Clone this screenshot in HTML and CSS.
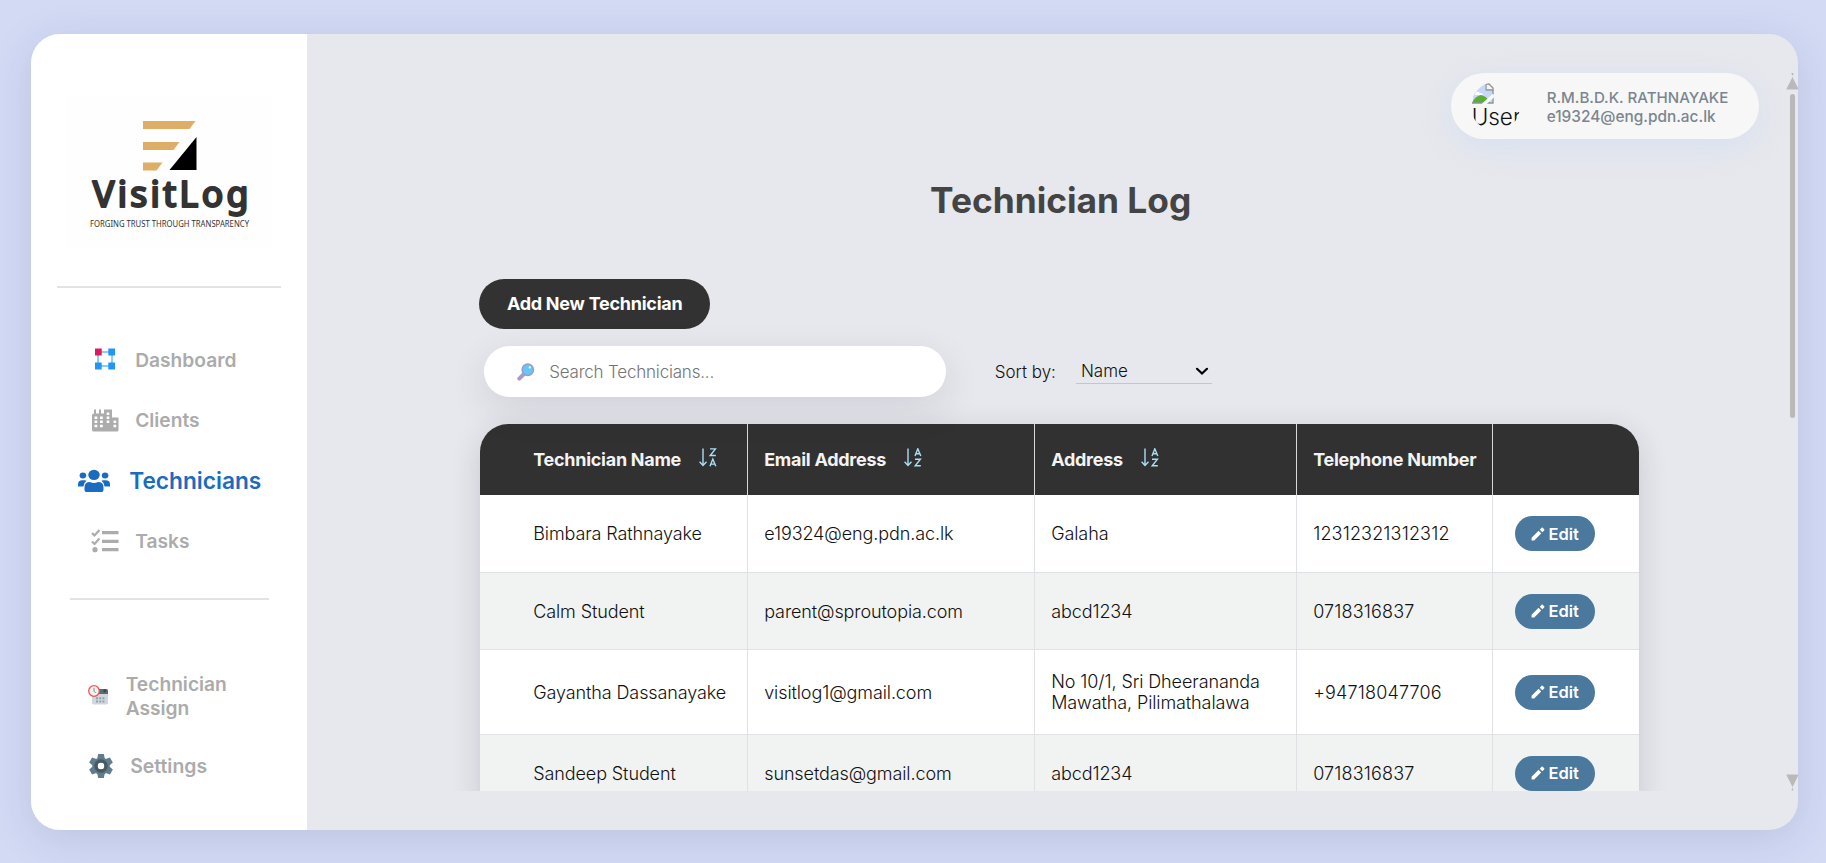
FILE: index.html
```html
<!DOCTYPE html>
<html lang="en">
<head>
<meta charset="utf-8">
<title>VisitLog</title>
<link rel="stylesheet" href="styles.css">
</head>
<body>
<svg class="defs" width="0" height="0">
  <symbol id="pencil" viewBox="0 0 24 24"><path fill="#fff" d="M1 18.500V23h4.500L17.500 11 13 6.500zM22.600 5.900a1.500 1.500 0 0 0 0-2.100L20.200 1.400a1.500 1.500 0 0 0-2.100 0L15 4.500 19.500 9z"/></symbol>
  <symbol id="az" viewBox="0 0 18 19"><g fill="none" stroke="#a9dff5" stroke-width="1.400"><path d="M4 .5V17.500M.6 13.800 4 17.500 7.500 13.800"/><path d="M11 8 13.800.8 16.800 8M12 5.800h3.800M11 11.200h5.400L11.200 17.800h5.600"/></g></symbol>
  <symbol id="za" viewBox="0 0 18 19"><g fill="none" stroke="#a9dff5" stroke-width="1.400"><path d="M4 .5V17.500M.6 13.800 4 17.500 7.500 13.800"/><path d="M11 .9h5.400L11.200 7.500h5.600M11 18.300 13.800 11.100 16.800 18.300M12 16.100h3.800"/></g></symbol>
</svg>
<div class="app">
  <aside class="sidebar">
    <div class="logo">
      <svg width="206" height="152" viewBox="0 0 206 152">
        <path fill="#dead66" d="M77 25H129.500L123.500 33H77zM77 46H113.500L107.500 54H77zM77 66.500H96.500L90.500 74.500H77z"/>
        <path fill="#000" d="M130.500 41V74H103.500z"/>
        <text class="brand" x="26.500" y="110.500" textLength="156" lengthAdjust="spacing">VisitLog</text>
        <text class="tagline" x="24" y="131" textLength="159" lengthAdjust="spacingAndGlyphs">FORGING TRUST THROUGH TRANSPARENCY</text>
      </svg>
    </div>
    <hr class="rule">
    <nav class="nav">
      <a class="item"><svg class="ico dash" width="22" height="22" viewBox="0 0 22 22"><path fill="none" stroke="#90caf9" stroke-width="2" d="M4 4H18V18H4z"/><path fill="#2196f3" d="M14.300.5H21V7.500H14.300zM1 14.500H7.700V21.500H1zM14.300 14.500H21V21.500H14.300z"/><path fill="#d81b60" d="M1 .5H7.700V7.500H1z"/></svg>Dashboard</a>
      <a class="item"><svg class="ico wide" width="28" height="24" viewBox="0 0 28 24"><path fill="#acacac" fill-rule="evenodd" d="M1 6.500L3 5.500V1.500H5V5.500L8 5.500V1.500H10V5.500L13 5.500V1.500H21V9.500H27.500V22Q27.500 23.500 26 23.500H2.500Q1 23.500 1 22zM3.500 8.500v2.500h2.800v-2.500zM9 8.500v2.500h2.800v-2.500zM3.500 12.500v2.500h2.800v-2.500zM9 12.500v2.500h2.800v-2.500zM3.500 16.800v2.500h2.800v-2.500zM9 16.800v2.500h2.800v-2.500zM15.700 4.500v2.500h2.600v-2.500zM15.700 8.500v2.500h2.600v-2.500zM15.700 12.500v2.500h2.600v-2.500zM22.500 12.500v2.500h2.700v-2.500zM22.500 16.800v2.500h2.700v-2.500z"/></svg>Clients</a>
      <a class="item active"><svg class="ico team" width="32" height="23" viewBox="0 0 640 512" preserveAspectRatio="none"><g fill="#1a6cc0"><circle cx="98" cy="145" r="66"/><circle cx="542" cy="145" r="66"/><circle cx="320" cy="130" r="115"/><path d="M0 390V340Q0 250 90 250H130Q155 250 172 262 110 310 108 390zM640 390V340Q640 250 550 250H510Q485 250 468 262 530 310 532 390zM130 460V410Q130 290 240 290 280 310 320 310 360 310 400 290 510 290 510 410V460Q510 512 458 512H182Q130 512 130 460z"/></g></svg>Technicians</a>
      <a class="item"><svg class="ico wide" width="28" height="24" viewBox="0 0 28 24"><g fill="none" stroke="#acacac"><path stroke-width="2.200" d="M1 4 3.500 6.500 8.500 1M1 12.500 3.500 15 8.500 9.500"/><path stroke-width="3.200" d="M11 3.700H27.500M11 12.300H27.500M11 20.700H27.500"/></g><circle cx="4" cy="20.700" r="2.600" fill="#acacac"/></svg>Tasks</a>
    </nav>
    <hr class="rule short">
    <nav class="nav lower">
      <a class="item assign"><svg class="ico" width="20" height="20" viewBox="0 0 20 20"><rect x="4" y="5" width="16" height="14.500" rx="1.800" fill="#cfd8dc"/><path fill="#546e7a" d="M10 4H18.500Q20 4 20 5.500V9H10z"/><circle cx="16.800" cy="5.800" r="1.500" fill="#37474f"/><path fill="#90a4ae" d="M8 12.300h2v2H8zM11.200 12.300h2v2h-2zM14.400 12.300h2v2h-2zM8 15.500h2v2H8zM11.200 15.500h2v2h-2zM14.400 15.500h2v2h-2z"/><circle cx="6" cy="6" r="5.300" fill="#f4f4f4" stroke="#ef5350" stroke-width="1.300"/><path d="M6 2.800V6.200L7.700 8" fill="none" stroke="#777" stroke-width=".9"/></svg><span>Technician<br>Assign</span></a>
      <a class="item settings"><svg class="ico" width="24" height="24" viewBox="-12 -12 24 24"><g fill="#607d8b"><circle r="8.800"/><path id="tooth" d="M-3.700-7.500-2.900-12H2.900L3.700-7.500z"/><use href="#tooth" transform="rotate(60)"/><use href="#tooth" transform="rotate(120)"/><use href="#tooth" transform="rotate(180)"/><use href="#tooth" transform="rotate(240)"/><use href="#tooth" transform="rotate(300)"/></g><circle r="4.900" fill="#fff" stroke="#455a64" stroke-width="3.600"/><circle r="3.200" fill="#fff"/></svg>Settings</a>
    </nav>
  </aside>
  <main class="main">
    <div class="content">
      <header class="top">
        <div class="user">
          <div class="avatar">
            <svg width="24" height="23" viewBox="0 0 24 23"><path fill="#c5d8f6" d="M2 2H14V9H22V21H2z"/><path fill="#fff" d="M4 12q2-4 5-1 3 0 3 2H4z"/><path fill="#5aad36" d="M1 21q3-7 9-8 6 1 9 8z"/><path fill="none" stroke="#8d9295" stroke-width="1.300" d="M1 21H22V8"/><path d="M15 2V8H22V6L18 2z" fill="#f4f4f4" stroke="#8d9295" stroke-width="1.300"/><path stroke="#f7f7f7" stroke-width="3.500" d="M12 23 23 13"/></svg>
            <span>User</span>
          </div>
          <div class="who"><div class="name">R.M.B.D.K. RATHNAYAKE</div><div class="mail">e19324@eng.pdn.ac.lk</div></div>
        </div>
      </header>
      <h1 class="title">Technician Log</h1>
      <section class="panel">
        <button class="add">Add New Technician</button>
        <div class="tools">
          <div class="search"><svg width="18" height="18" viewBox="0 0 18 18"><path d="M2.300 15.700 7 11" stroke="#a79bc9" stroke-width="4" stroke-linecap="round"/><circle cx="10.800" cy="6.800" r="5.700" fill="#64c8f4" stroke="#9d9ac8" stroke-width="1.500"/><circle cx="12.800" cy="4.400" r="1.100" fill="#fff"/></svg><span>Search Technicians...</span></div>
          <span class="sortlabel">Sort by:</span>
          <div class="select"><span>Name</span><svg width="14" height="9" viewBox="0 0 14 9"><path d="M2 1.800 7 6.600 12 1.800" fill="none" stroke="#000" stroke-width="2.200" stroke-linecap="round"/></svg></div>
        </div>
        <table class="grid">
          <colgroup><col class="c1"><col class="c2"><col class="c3"><col class="c4"><col class="c5"></colgroup>
          <thead><tr>
            <th>Technician Name<svg class="sort" width="18" height="19"><use href="#za"/></svg></th>
            <th>Email Address<svg class="sort" width="18" height="19"><use href="#az"/></svg></th>
            <th>Address<svg class="sort" width="18" height="19"><use href="#az"/></svg></th>
            <th>Telephone Number</th><th></th>
          </tr></thead>
          <tbody>
            <tr><td>Bimbara Rathnayake</td><td>e19324@eng.pdn.ac.lk</td><td>Galaha</td><td class="phone">12312321312312</td><td><button class="edit"><svg width="14" height="14"><use href="#pencil"/></svg>Edit</button></td></tr>
            <tr><td>Calm Student</td><td>parent@sproutopia.com</td><td>abcd1234</td><td class="phone">0718316837</td><td><button class="edit"><svg width="14" height="14"><use href="#pencil"/></svg>Edit</button></td></tr>
            <tr class="tall"><td>Gayantha Dassanayake</td><td>visitlog1@gmail.com</td><td>No 10/1, Sri Dheerananda<br>Mawatha, Pilimathalawa</td><td class="phone">+94718047706</td><td><button class="edit"><svg width="14" height="14"><use href="#pencil"/></svg>Edit</button></td></tr>
            <tr><td>Sandeep Student</td><td>sunsetdas@gmail.com</td><td>abcd1234</td><td class="phone">0718316837</td><td><button class="edit"><svg width="14" height="14"><use href="#pencil"/></svg>Edit</button></td></tr>
          </tbody>
        </table>
      </section>
    </div>
    <div class="scrollbar">
      <svg width="13" height="17" viewBox="0 0 13 17"><path fill="#b9b9b9" d="M6.500 4 12.800 16.500H.2zM5.200 0H7.800L6.500 3z"/></svg>
      <div class="thumb"></div>
      <svg width="13" height="17" viewBox="0 0 13 17"><path fill="#b9b9b9" d="M.2.500H12.800L6.500 13zM5.400 16.500 6.500 13.500 7.600 16.500z"/></svg>
    </div>
  </main>
</div>
</body>
</html>
```
FILE: styles.css
```css
* { box-sizing: border-box; }
body { margin: 0; height: 863px; overflow: hidden; background: #d3daf4; font-family: Inter, "Liberation Sans", sans-serif; padding: 33.500px 27.500px 33px 31.200px; }
.defs { position: absolute; }
.app { display: flex; width: 1767px; height: 796.500px; border-radius: 29px; overflow: hidden; background: #e7e8ed; box-shadow: 0 9px 44px rgba(31, 45, 100, .13); }
.sidebar { width: 275.500px; background: #fff; display: flex; flex-direction: column; flex: none; }
.logo { margin: 62.600px 0 0 35px; width: 206px; height: 152px; background: #fefefe; }
.logo svg { display: block; }
.brand { font: 500 36px "Noto Sans", sans-serif; fill: #333; stroke: #333; stroke-width: 1.800px; stroke-linejoin: round; }
.tagline { font: 400 8.400px "Noto Sans", sans-serif; fill: #333; }
.rule { width: 224px; height: 2px; margin: 37.500px 0 0 26px; border: 0; background: #e2e3e4; }
.nav { display: flex; flex-direction: column; padding-top: 42px; }
.item { display: flex; align-items: center; height: 60.300px; padding-left: 63px; font-size: 19.200px; font-weight: 600; color: #ababab; }
.ico { margin-right: 19px; flex: none; }
.ico.dash { margin: -1px 19px 0 0; }
.ico.wide { margin-left: -3.500px; margin-right: 16.500px; }
.item.active { padding-left: 46.500px; color: #1a6cc0; font-size: 22.700px; }
.ico.team { margin-right: 19.500px; }
.rule.short { width: 199px; margin: 27px 0 0 39px; flex: none; }
.nav.lower { padding-top: 60px; }
.assign { height: 72px; padding-left: 57px; line-height: 24px; }
.assign .ico { margin-right: 17.500px; margin-top: -2px; }
.settings { height: 68px; padding-left: 57.500px; font-size: 19.400px; }
.settings .ico { margin-right: 17.500px; }
.main { flex: 1; display: flex; height: 757px; overflow: hidden; }
.content { width: 1479px; height: 757px; overflow: hidden; flex: none; padding: 39px 0 0 172.500px; }
.top { display: flex; justify-content: flex-end; padding-right: 27px; }
.user { display: flex; width: 308px; height: 66.500px; border-radius: 34px; background: #f7f7f7; box-shadow: 0 8px 34px rgba(183, 210, 250, .33); padding: 9px 20px; }
.avatar { width: 49px; height: 49px; border-radius: 50%; overflow: hidden; font-size: 22.500px; font-weight: 350; line-height: 24px; color: #111; }
.avatar svg { display: block; }
.avatar span { display: block; margin-top: 0; padding-left: 1px; }
.who { padding: 6.500px 0 0 27px; font-weight: 500; color: #7b858f; line-height: 19px; white-space: nowrap; }
.name { font-size: 15.100px; }
.mail { font-size: 15.400px; }
.title { margin: 38px 0 0 -172px; width: 1507px; text-align: center; font-size: 35.300px; line-height: 48px; font-weight: 700; color: #444; }
.panel { margin-top: 54px; }
.add { display: block; border: 0; width: 231px; height: 49.500px; border-radius: 25px; background: #323232; color: #fff; font: 700 18px Inter, sans-serif; letter-spacing: -.25px; padding: 0; }
.tools { display: flex; align-items: center; margin: 17.500px 0 27px 4.500px; height: 51px; font-size: 17px; font-weight: 350; color: #111; }
.search { width: 462px; height: 51px; border-radius: 26px; background: #fff; display: flex; align-items: center; padding-left: 33px; color: #757575; letter-spacing: -.2px; box-shadow: 0 12px 38px rgba(40, 40, 60, .11); }
.search span { margin-left: 14.500px; }
.sortlabel { margin-left: 49px; }
.select { display: flex; align-items: center; justify-content: space-between; width: 136px; height: 24px; margin-left: 20px; padding: 0 3px 0 5px; border-bottom: 1px solid #c6c6c8; }
.grid { width: 1159px; table-layout: fixed; border-spacing: 0; border-radius: 28px 28px 0 0; overflow: hidden; margin-left: 1px; background: #fff; box-shadow: 0 8px 30px rgba(40, 40, 60, .16); }
.c1 { width: 268px; } .c2 { width: 287px; } .c3 { width: 262px; } .c4 { width: 196px; } .c5 { width: 146px; }
th { height: 71px; background: #313131; color: #f3f3f3; text-align: left; font-size: 18px; font-weight: 700; border-right: 1px solid #d8d8d8; padding: 0 0 2px 16px; white-space: nowrap; letter-spacing: -.27px; }
th:nth-child(4) { padding-bottom: 0; }
td { height: 77.500px; padding: 1px 0 0 16px; font-size: 18px; font-weight: 350; letter-spacing: -.1px; line-height: 21px; color: #111; border-right: 1px solid #e0e1e5; border-bottom: 1px solid #e0e1e5; white-space: nowrap; }
.phone { letter-spacing: .15px; }
th:first-child, td:first-child { padding-left: 53px; }
th:last-child, td:last-child { border-right: 0; padding-left: 22px; }
tbody tr:nth-child(even) { background: #f1f3f2; }
.tall td { height: 84.700px; }
.sort { margin-left: 18px; vertical-align: -1px; }
.edit { display: flex; align-items: center; justify-content: center; gap: 3px; width: 80px; height: 35px; border: 0; border-radius: 18px; background: #4b789d; color: #fff; font: 600 16.500px Inter, sans-serif; padding: 0; }
.scrollbar { width: 13px; height: 757px; padding-top: 39px; display: flex; flex-direction: column; align-items: center; }
.scrollbar svg { flex: none; }
.thumb { width: 5px; height: 324px; border-radius: 3px; background: #b9b9b9; margin: 4px 0 356px; flex: none; }
```
